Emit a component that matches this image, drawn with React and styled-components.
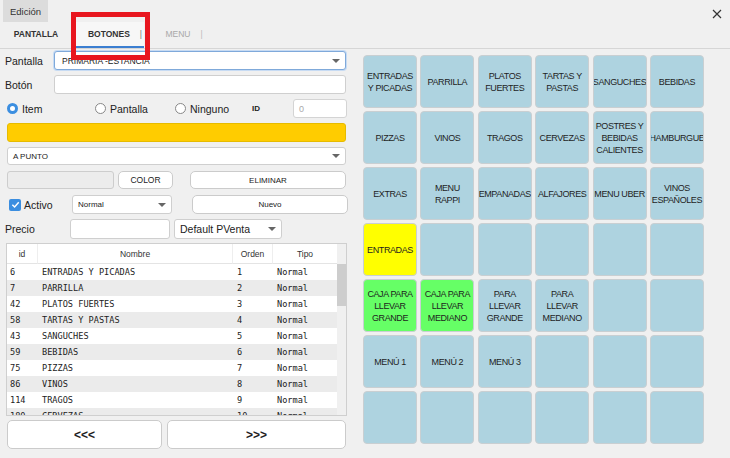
import React from 'react';
import styled, { createGlobalStyle } from 'styled-components';

const GlobalStyle = createGlobalStyle`
  body {
    margin: 0;
    background: #f0f0f0;
    font-family: 'Liberation Sans', Arial, sans-serif;
    color: #222;
  }
  * { box-sizing: border-box; }
`;

const Window = styled.div`
  position: relative;
  width: 730px;
  height: 458px;
  overflow: hidden;
  background: #f0f0f0;
  display: flex;
  flex-direction: column;
`;

const TitleBar = styled.div`
  height: 22px;
  display: flex;
  align-items: flex-start;
  justify-content: space-between;
  padding: 0 8px 0 3px;
`;

const MenuTab = styled.div`
  height: 22px;
  width: 45px;
  display: flex;
  align-items: center;
  justify-content: center;
  background: #dcdcdc;
  font-size: 9.5px;
  color: #333;
`;

const Close = styled.div`
  margin-top: 5px;
  width: 10px;
  height: 10px;
`;

const TabBar = styled.div`
  height: 27px;
  display: flex;
  align-items: stretch;
  border-bottom: 1px solid #d6d6d6;
`;

const Tab = styled.div`
  display: flex;
  align-items: center;
  justify-content: center;
  width: ${(p) => p.$w}px;
  padding-left: ${(p) => p.$pl || 0}px;
  font-size: 8.5px;
  font-weight: ${(p) => (p.$muted ? 'normal' : 'bold')};
  color: ${(p) => (p.$muted ? '#a8a8a8' : '#333')};
  border-bottom: 2px solid ${(p) => (p.$active ? '#3b7fd1' : 'transparent')};
  background: ${(p) => (p.$active ? '#f7f7f7' : 'transparent')};
  gap: 10px;
`;

const Sep = styled.span`
  color: ${(p) => (p.$dark ? '#777' : '#bbb')};
  font-weight: normal;
`;

const Annotation = styled.div`
  position: absolute;
  left: 71px;
  top: 12px;
  width: 79px;
  height: 48px;
  border: 5px solid #e8161f;
  pointer-events: none;
`;

const Body = styled.div`
  display: flex;
  flex: 1;
`;

const LeftPanel = styled.div`
  width: 350px;
  padding: 2px 0 0 5px;
  display: flex;
  flex-direction: column;
`;

const Row = styled.div`
  display: flex;
  align-items: center;
  height: ${(p) => p.$h || 19}px;
  margin-bottom: ${(p) => p.$mb ?? 5}px;
  padding-left: ${(p) => p.$pl || 0}px;
`;

const Label = styled.div`
  width: ${(p) => p.$w || 49}px;
  font-size: 10.5px;
  color: #222;
  flex-shrink: 0;
`;

const Field = styled.div`
  width: ${(p) => p.$w}px;
  height: 100%;
  margin-left: ${(p) => p.$ml || 0}px;
  background: ${(p) => p.$bg || '#fff'};
  border: 1px solid ${(p) => p.$border || '#cfcfcf'};
  border-radius: 3px;
  display: flex;
  align-items: center;
  justify-content: space-between;
  padding: 0 5px 0 ${(p) => p.$pad || 5}px;
  font-size: ${(p) => p.$fs || 8}px;
  color: ${(p) => p.$color || '#222'};
  box-shadow: ${(p) => (p.$focus ? '0 0 0 1px #c7dbf3' : 'none')};
  flex-shrink: 0;
`;

const Caret = styled.span`
  width: 0;
  height: 0;
  border-left: 4px solid transparent;
  border-right: 4px solid transparent;
  border-top: 4px solid #666;
`;

const Radio = styled.div`
  display: flex;
  align-items: center;
  gap: 4px;
  font-size: 10.5px;
  width: ${(p) => p.$w}px;
  flex-shrink: 0;
`;

const RadioDot = styled.span`
  width: 11px;
  height: 11px;
  border-radius: 50%;
  border: ${(p) => (p.$on ? '3px solid #3b8ee0' : '1px solid #888')};
  background: #fff;
`;

const IdLabel = styled.div`
  width: 41px;
  font-size: 8px;
  font-weight: bold;
  flex-shrink: 0;
`;

const Button = styled.div`
  width: ${(p) => p.$w}px;
  height: 100%;
  margin-left: ${(p) => p.$ml || 0}px;
  background: #fff;
  border: 1px solid #cbcbcb;
  border-radius: 5px;
  display: flex;
  align-items: center;
  justify-content: center;
  font-size: ${(p) => p.$fs || 8.5}px;
  font-weight: ${(p) => (p.$bold ? 'bold' : 'normal')};
  color: #222;
  flex-shrink: 0;
`;

const Check = styled.span`
  width: 12px;
  height: 12px;
  border-radius: 2px;
  background: #3b8ee0;
  display: flex;
  align-items: center;
  justify-content: center;
  margin-left: 2px;
`;

const CheckLabel = styled.div`
  display: flex;
  align-items: center;
  gap: 3px;
  width: 65px;
  font-size: 10.5px;
  flex-shrink: 0;
`;

const Table = styled.div`
  width: 341px;
  height: 173px;
  margin-left: 1px;
  border: 1px solid #cfcfcf;
  background: #fff;
  position: relative;
  overflow: hidden;
  margin-bottom: 4px;
`;

const Grid = styled.div`
  display: grid;
  grid-template-columns: 31px 195px 40px 65px;
`;

const HeadCell = styled.div`
  height: 20px;
  display: flex;
  align-items: center;
  justify-content: center;
  font-size: 8.5px;
  color: #333;
  border-right: 1px solid #eeeeee;
  border-bottom: 1px solid #e4e4e4;
`;

const Cell = styled.div`
  height: 16px;
  display: flex;
  align-items: center;
  padding-left: ${(p) => p.$pl || 3}px;
  font-family: 'DejaVu Sans Mono', 'Liberation Mono', monospace;
  font-size: 8.6px;
  color: #222;
  white-space: nowrap;
  background: ${(p) => (p.$alt ? '#ebebeb' : '#fff')};
`;

const ScrollTrack = styled.div`
  position: absolute;
  right: 0;
  top: 0;
  bottom: 0;
  width: 9px;
  background: #f0f0f0;
`;

const ScrollThumb = styled.div`
  margin-top: 20px;
  height: 42px;
  background: #cdcdcd;
`;

const NavRow = styled.div`
  display: flex;
  gap: 5px;
  height: 29px;
  padding-left: 2px;
`;

const RightPanel = styled.div`
  padding: 6px 0 0 13px;
`;

const ButtonGrid = styled.div`
  display: grid;
  grid-template-columns: repeat(6, 54px);
  grid-auto-rows: 53px;
  column-gap: 3.4px;
  row-gap: 3px;
`;

const Tile = styled.div`
  background: ${(p) => p.$bg || '#aed3e0'};
  border: 1px solid #c9cfd2;
  border-radius: 4px;
  display: flex;
  align-items: center;
  justify-content: center;
  text-align: center;
  font-size: 9px;
  line-height: 12px;
  color: #1e1e1e;
  letter-spacing: -0.4px;
  overflow: hidden;
  white-space: pre-line;
`;

const rows = [
  ['6', 'ENTRADAS Y PICADAS', '1'],
  ['7', 'PARRILLA', '2'],
  ['42', 'PLATOS FUERTES', '3'],
  ['58', 'TARTAS Y PASTAS', '4'],
  ['43', 'SANGUCHES', '5'],
  ['59', 'BEBIDAS', '6'],
  ['75', 'PIZZAS', '7'],
  ['86', 'VINOS', '8'],
  ['114', 'TRAGOS', '9'],
  ['180', 'CERVEZAS', '10'],
];

const Y = '#ffff00';
const G = '#66ff66';

const tiles = [
  ['ENTRADAS\nY PICADAS'], ['PARRILLA'], ['PLATOS\nFUERTES'], ['TARTAS Y\nPASTAS'], ['SANGUCHES'], ['BEBIDAS'],
  ['PIZZAS'], ['VINOS'], ['TRAGOS'], ['CERVEZAS'], ['POSTRES Y\nBEBIDAS\nCALIENTES'], ['HAMBURGUE'],
  ['EXTRAS'], ['MENU\nRAPPI'], ['EMPANADAS'], ['ALFAJORES'], ['MENU UBER'], ['VINOS\nESPAÑOLES'],
  ['ENTRADAS', Y], [''], [''], [''], [''], [''],
  ['CAJA PARA\nLLEVAR\nGRANDE', G], ['CAJA PARA\nLLEVAR\nMEDIANO', G], ['PARA\nLLEVAR\nGRANDE'], ['PARA\nLLEVAR\nMEDIANO'], [''], [''],
  ['MENÚ 1'], ['MENÚ 2'], ['MENÚ 3'], [''], [''], [''],
  [''], [''], [''], [''], [''], [''],
];

export default function App() {
  return (
    <>
      <GlobalStyle />
      <Window>
        <TitleBar>
          <MenuTab>Edición</MenuTab>
          <Close>
            <svg width="10" height="10" viewBox="0 0 10 10">
              <path d="M1 1 L9 9 M9 1 L1 9" stroke="#333" strokeWidth="1.2" />
            </svg>
          </Close>
        </TitleBar>
        <TabBar>
          <Tab $w={72} $pl={0}>PANTALLA</Tab>
          <Tab $w={72} $active $pl={14}>
            BOTONES <Sep $dark>|</Sep>
          </Tab>
          <Tab $w={68} $muted $pl={12}>
            MENU <Sep>|</Sep>
          </Tab>
        </TabBar>
        <Body>
          <LeftPanel>
            <Row>
              <Label>Pantalla</Label>
              <Field $w={292} $border="#7fa9da" $focus $pad={7} $fs={8.5}>
                PRIMARIA -ESTANCIA <Caret />
              </Field>
            </Row>
            <Row>
              <Label>Botón</Label>
              <Field $w={292} />
            </Row>
            <Row $pl={2}>
              <Radio $w={88}>
                <RadioDot $on /> Item
              </Radio>
              <Radio $w={80}>
                <RadioDot /> Pantalla
              </Radio>
              <Radio $w={77}>
                <RadioDot /> Ninguno
              </Radio>
              <IdLabel>ID</IdLabel>
              <Field $w={54} $color="#aaa" $fs={9} $border="#d4d4d4">0</Field>
            </Row>
            <Row $pl={2}>
              <Field $w={339} $bg="#ffcc00" $border="#e6bb00" />
            </Row>
            <Row $h={18} $mb={6} $pl={2}>
              <Field $w={339}>
                A PUNTO <Caret />
              </Field>
            </Row>
            <Row $h={18} $mb={6} $pl={2}>
              <Field $w={107} $bg="#ececec" $border="#cdcdcd" />
              <Button $w={55} $ml={4}>COLOR</Button>
              <Button $w={156} $ml={17} $fs={8}>ELIMINAR</Button>
            </Row>
            <Row $h={19} $pl={2}>
              <CheckLabel>
                <Check>
                  <svg width="9" height="9" viewBox="0 0 10 10">
                    <path d="M1.5 5.2 L4 7.7 L8.6 2.4" stroke="#fff" strokeWidth="1.6" fill="none" />
                  </svg>
                </Check>
                Activo
              </CheckLabel>
              <Field $w={100}>
                Normal <Caret />
              </Field>
              <Button $w={156} $ml={20} $fs={8}>Nuevo</Button>
            </Row>
            <Row $h={20} $mb={4}>
              <Label $w={65}>Precio</Label>
              <Field $w={100} />
              <Field $w={108} $ml={4} $fs={10.5}>
                Default PVenta <Caret />
              </Field>
            </Row>
            <Table>
              <Grid>
                <HeadCell>id</HeadCell>
                <HeadCell>Nombre</HeadCell>
                <HeadCell>Orden</HeadCell>
                <HeadCell>Tipo</HeadCell>
                {rows.map((r, i) => (
                  <React.Fragment key={r[0]}>
                    <Cell $alt={i % 2 === 1}>{r[0]}</Cell>
                    <Cell $alt={i % 2 === 1} $pl={4}>{r[1]}</Cell>
                    <Cell $alt={i % 2 === 1} $pl={4}>{r[2]}</Cell>
                    <Cell $alt={i % 2 === 1} $pl={4}>Normal</Cell>
                  </React.Fragment>
                ))}
              </Grid>
              <ScrollTrack>
                <ScrollThumb />
              </ScrollTrack>
            </Table>
            <NavRow>
              <Button $w={155} $bold $fs={12}>&lt;&lt;&lt;</Button>
              <Button $w={179} $bold $fs={12}>&gt;&gt;&gt;</Button>
            </NavRow>
          </LeftPanel>
          <RightPanel>
            <ButtonGrid>
              {tiles.map((t, i) => (
                <Tile key={i} $bg={t[1]}>{t[0]}</Tile>
              ))}
            </ButtonGrid>
          </RightPanel>
        </Body>
        <Annotation />
      </Window>
    </>
  );
}
